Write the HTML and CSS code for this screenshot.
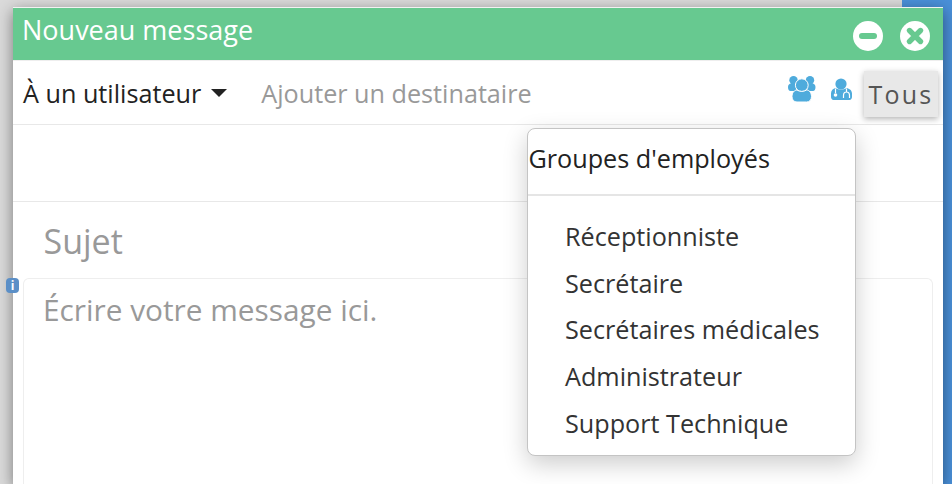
FILE: index.html
```html
<!DOCTYPE html>
<html lang="fr">
<head>
  <meta charset="UTF-8" />
  <title>Nouveau message</title>
  <meta name="viewport" content="width=device-width, initial-scale=1.0" />
  <link rel="stylesheet" href="styles.css">
</head>
<body>

<div class="fenetre">
  <!-- Titre -->
  <div class="entete">
    <span class="titre">Nouveau message</span>
    <div class="entete-actions">
      <svg class="rond" viewBox="0 0 30 30"><circle cx="15" cy="15" r="15" fill="#fff"/><rect x="6" y="12" width="18" height="6" rx="3" fill="#67c990"/></svg>
      <svg class="rond" viewBox="0 0 30 30"><circle cx="15" cy="15" r="15" fill="#fff"/><path d="M9.500 9.500l11 11M20.500 9.500l-11 11" stroke="#67c990" stroke-width="5.400" stroke-linecap="round"/></svg>
    </div>
  </div>

  <!-- Destinataire -->
  <div class="destinataire">
    <span class="type">À un utilisateur</span>
    <span class="caret"></span>
    <span class="ajouter">Ajouter un destinataire</span>
    <div class="outils">
      <svg class="ico-groupe" viewBox="0 0 28 26" fill="#4eabdc">
        <circle cx="5.500" cy="4.200" r="4.200"/><circle cx="22" cy="4.200" r="4.200"/>
        <path d="M0 11c0-2 1.500-3.500 3-3.500h4.500l1 7.500H2.500C1 15 0 13.500 0 11zM27.500 11c0-2-1.500-3.500-3-3.500H20l-1 7.500h6c1.500 0 2.500-1.500 2.500-4z"/>
        <circle cx="13.800" cy="9.200" r="6.400" stroke="#fff" stroke-width="1"/>
        <path d="M4 20.500c0-4 2.500-6.500 5-6.500 1.200.9 2.900 1.400 4.800 1.400s3.500-.5 4.700-1.400c2.500 0 5 2.500 5 6.500 0 3.500-2 5.500-5 5.500H9c-3 0-5-2-5-5.500z" stroke="#fff" stroke-width="1"/>
      </svg>
      <svg class="ico-docteur" viewBox="0 0 21 22">
        <circle cx="10" cy="6" r="5.600" fill="#4eabdc"/>
        <path d="M0 15.500c0-3 2-5 4.500-5.500 1.500 1 3.500 1.500 5.500 1.500s4-.5 5.500-1.500c3 .5 5.500 2.500 5.500 5.500v3.500c0 1.500-1 3-2.500 3h-16C1 22 0 20.500 0 19z" fill="#4eabdc"/>
        <path d="M4.500 10.500V15M15.500 10.500V14M12.500 20v-2.500c0-2 1.300-3.500 3-3.500s3 1.500 3 3.500V20" stroke="#fff" stroke-width="1.200" fill="none"/>
        <circle cx="4.500" cy="17" r="1.800" fill="#fff"/>
      </svg>
      <button class="tous" type="button">Tous</button>
    </div>
  </div>

  <div class="ligne-vide"></div>

  <div class="sujet">Sujet</div>

  <span class="info">i</span>
  <div class="message">Écrire votre message ici.</div>

  <!-- Menu des groupes -->
  <div class="menu">
    <div class="menu-titre">Groupes d'employés</div>
    <ul class="menu-liste">
      <li>Réceptionniste</li>
      <li>Secrétaire</li>
      <li>Secrétaires médicales</li>
      <li>Administrateur</li>
      <li>Support Technique</li>
    </ul>
  </div>
</div>

</body>
</html>
```

FILE: styles.css
```css
html, body {
  height: 100%;
}

body {
  background: linear-gradient(to right, #dadada 0, #dadada 902px, #4a90d9 902px);
  font-family: 'Open Sans', sans-serif;
  margin: 0;
  padding: 7px 9px 0 13px;
  box-sizing: border-box;
  overflow: hidden;
}

.fenetre {
  position: relative;
  height: 477px;
  box-sizing: border-box;
  display: flex;
  flex-direction: column;
  background: white;
  box-shadow: 0 4px 14px rgba(0,0,0,0.45);
  border-top: 1px solid #f2f2f2;
}

.entete {
  height: 52px;
  background: #67c990;
  display: flex;
  justify-content: space-between;
  color: white;
}

.titre {
  font-size: 27px;
  line-height: 44px;
  padding-left: 9px;
}

.entete-actions {
  display: flex;
  gap: 17px;
  padding: 13px 13px 0 0;
}

.rond {
  width: 30px;
  height: 30px;
}

.destinataire {
  height: 63px;
  display: flex;
  align-items: center;
  border-top: 1px solid #eee;
  border-bottom: 1px solid #e8e8e8;
  padding-left: 10px;
}

.type {
  font-size: 25.200px;
  color: #222;
}

.caret {
  border-top: 8px solid #222;
  border-left: 8px solid transparent;
  border-right: 8px solid transparent;
  margin: 0 34px 0 10px;
}

.ajouter {
  font-size: 25.200px;
  color: #999;
}

.outils {
  margin-left: auto;
  display: flex;
  align-items: center;
  padding-right: 5px;
}

.ico-groupe {
  width: 28px;
  height: 26px;
  margin-right: 15px;
  margin-bottom: 7px;
}

.ico-docteur {
  width: 21px;
  height: 22px;
  margin-right: 12px;
  margin-bottom: 7px;
}

.tous {
  width: 74px;
  height: 46px;
  margin-top: 3px;
  background: #e8e8e8;
  border: none;
  font-family: inherit;
  font-size: 25px;
  letter-spacing: 2.200px;
  color: #555;
  padding: 0;
  box-shadow: 0 2px 6px rgba(0,0,0,0.3);
}

.ligne-vide {
  height: 76px;
  border-bottom: 1px solid #e8e8e8;
}

.sujet {
  font-size: 34px;
  color: #999;
  padding: 16px 0 0 30.500px;
  height: 60px;
}

.info {
  position: absolute;
  left: -7px;
  top: 270px;
  width: 13px;
  height: 15px;
  border-radius: 4px;
  background: #5b8fc7;
  color: white;
  font-size: 12px;
  font-weight: bold;
  line-height: 15px;
  text-align: center;
}

.message {
  flex: 1;
  margin: 0 10px;
  border: 1px solid #eee;
  border-bottom: none;
  border-radius: 6px 6px 0 0;
  padding: 10px 19px;
  font-size: 29.800px;
  color: #999;
}

.menu {
  position: absolute;
  left: 514px;
  top: 120px;
  width: 327px;
  height: 326px;
  background: white;
  border: 1px solid #c4c4c4;
  border-radius: 8px;
  box-shadow: 0 8px 24px rgba(0,0,0,0.2);
}

.menu-titre {
  font-size: 25.200px;
  color: #222;
  height: 65px;
  line-height: 58px;
  padding-left: 0.500px;
  border-bottom: 2px solid #e5e5e5;
}

.menu-liste {
  list-style: none;
  margin: 0;
  padding: 18px 0 0 37px;
  font-size: 25.200px;
  color: #333;
}

.menu-liste li {
  height: 46.700px;
  line-height: 44px;
}
```
